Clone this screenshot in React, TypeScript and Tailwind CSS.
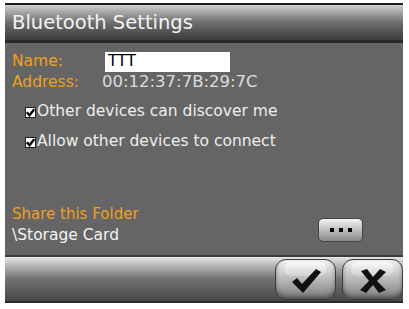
import React from "react";

const font = { fontFamily: '"DejaVu Sans", Verdana, sans-serif' };

const CheckBox = ({ label }: { label: string }) => {
  return (
    <div className="flex items-center h-[16px] pl-[20px]">
      <div className="shrink-0 w-[11px] h-[11px] bg-white border border-[#222] flex items-center justify-center">
        <svg width="9" height="9" viewBox="0 0 9 9">
          <path d="M0.8 4.2 L3.5 7.2 L8.3 1.2" stroke="#000" strokeWidth="2.4" fill="none" />
        </svg>
      </div>
      <span className="ml-[1px] text-[15.5px] text-[#eeeeee] leading-none whitespace-nowrap">{label}</span>
    </div>
  );
};

const GlossButton = ({ children }: { children: React.ReactNode }) => {
  return (
    <div className="relative w-[61px] h-[41px] rounded-[11px] border border-[#3a3a3a] bg-gradient-to-b from-[#f2f2f2] via-[#b8b8b8] to-[#7c7c7c] shadow-[inset_0_-3px_4px_rgba(0,0,0,0.35)] flex items-center justify-center">
      <div className="absolute left-[8px] right-[8px] top-[2px] h-[14px] rounded-[8px] bg-gradient-to-b from-[#ffffff] to-[#d4d4d4] opacity-80" />
      <div className="relative mt-[4px]">{children}</div>
    </div>
  );
};

export default function App() {
  return (
    <div className="w-[409px] h-[309px] bg-white pt-[3px] pl-[5px]" style={font}>
      <div className="w-[398px] flex flex-col">
        {/* title bar */}
        <div className="h-[2px] bg-[#1a1a1a]" />
        <div className="h-[35px] bg-gradient-to-b from-[#d0d0d0] via-[#6e6e6e] to-[#3c3c3c] flex items-center pl-[7px]">
          <span className="text-[19.5px] text-[#f4f4f4] leading-none">Bluetooth Settings</span>
        </div>
        <div className="h-[3px] bg-[#2a2a2a]" />

        {/* content */}
        <div className="h-[212px] bg-[#656565] flex flex-col pl-[7px] pt-[9px]">
          <div className="flex items-center h-[20px]">
            <span className="w-[93px] text-[15.5px] text-[#f0a020] leading-none">Name:</span>
            <div className="w-[125px] h-[20px] bg-white flex items-center pl-[3px]">
              <span className="text-[15.5px] text-black leading-none">TTT</span>
            </div>
          </div>
          <div className="flex items-center h-[17px] mt-[2px]">
            <span className="w-[90px] text-[15.5px] text-[#f0a020] leading-none">Address:</span>
            <span className="text-[16.5px] text-[#dddddd] leading-none">00:12:37:7B:29:7C</span>
          </div>
          <div className="-ml-[7px] mt-[13px] flex flex-col gap-[14px]">
            <CheckBox label="Other devices can discover me" />
            <CheckBox label="Allow other devices to connect" />
          </div>
          <div className="mt-[56px] flex items-end">
            <div className="flex flex-col">
              <span className="text-[15px] text-[#f0a020] leading-[17px]">Share this Folder</span>
              <span className="text-[15.5px] text-[#f4f4f4] leading-[17px] mt-[4px]">\Storage Card</span>
            </div>
            <div className="ml-auto mr-[40px] mb-[2px] w-[45px] h-[24px] rounded-[5px] border border-[#444] bg-gradient-to-b from-[#f4f4f4] to-[#8a8a8a] flex items-center justify-center gap-[5px]">
              <div className="w-[4px] h-[4px] bg-black" />
              <div className="w-[4px] h-[4px] bg-black" />
              <div className="w-[4px] h-[4px] bg-black" />
            </div>
          </div>
        </div>

        {/* bottom bar */}
        <div className="h-[2px] bg-[#3a3a3a]" />
        <div className="h-[44px] bg-gradient-to-b from-[#e6e6e6] via-[#727272] to-[#474747] flex items-center justify-end gap-[6px] pr-[0px]">
          <GlossButton>
            <svg width="32" height="26" viewBox="0 0 32 26">
              <path d="M2 14 L7 10 L12 16 L26 1 L31 4 L13 25 Z" fill="#111" />
            </svg>
          </GlossButton>
          <GlossButton>
            <svg width="30" height="26" viewBox="0 0 30 26">
              <path d="M3 3 L9 1 L15 9 L22 1 L28 4 L19 13 L28 22 L21 25 L15 17 L8 25 L2 22 L11 13 Z" fill="#111" />
            </svg>
          </GlossButton>
        </div>
        <div className="h-[2px] bg-[#2a2a2a]" />
      </div>
    </div>
  );
}
